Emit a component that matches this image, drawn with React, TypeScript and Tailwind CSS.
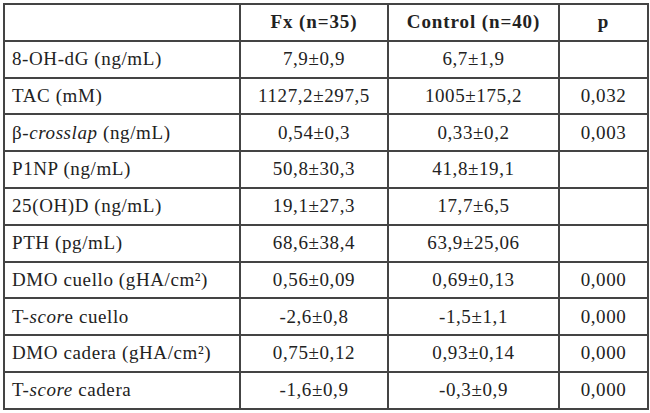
import type { ReactNode } from "react";

interface Row {
  label: ReactNode;
  fx: string;
  control: string;
  p: string;
}

const rows: Row[] = [
  { label: "8-OH-dG (ng/mL)", fx: "7,9±0,9", control: "6,7±1,9", p: "" },
  { label: "TAC (mM)", fx: "1127,2±297,5", control: "1005±175,2", p: "0,032" },
  {
    label: (
      <>
        β-<i>crosslap</i> (ng/mL)
      </>
    ),
    fx: "0,54±0,3",
    control: "0,33±0,2",
    p: "0,003",
  },
  { label: "P1NP (ng/mL)", fx: "50,8±30,3", control: "41,8±19,1", p: "" },
  { label: "25(OH)D (ng/mL)", fx: "19,1±27,3", control: "17,7±6,5", p: "" },
  { label: "PTH (pg/mL)", fx: "68,6±38,4", control: "63,9±25,06", p: "" },
  { label: "DMO cuello (gHA/cm²)", fx: "0,56±0,09", control: "0,69±0,13", p: "0,000" },
  {
    label: (
      <>
        T-<i>scor</i>e cuello
      </>
    ),
    fx: "-2,6±0,8",
    control: "-1,5±1,1",
    p: "0,000",
  },
  { label: "DMO cadera (gHA/cm²)", fx: "0,75±0,12", control: "0,93±0,14", p: "0,000" },
  {
    label: (
      <>
        T-<i>score</i> cadera
      </>
    ),
    fx: "-1,6±0,9",
    control: "-0,3±0,9",
    p: "0,000",
  },
];

const cell = "border-r-2 border-b-2 border-[#444] p-0 align-middle";

export default function App() {
  return (
    <div className="w-[650px] h-[413px] bg-white p-[3px] text-[#222] font-['Liberation_Serif',serif] text-[19px] tracking-[0.6px]">
      <table className="table-fixed border-separate border-spacing-0 border-l-2 border-t-2 border-[#444] w-[644px]">
        <colgroup>
          <col className="w-[236px]" />
          <col className="w-[148px]" />
          <col className="w-[171px]" />
          <col className="w-[89px]" />
        </colgroup>
        <thead>
          <tr className="h-[36.8px] font-bold tracking-[0.9px]">
            <th className={cell}></th>
            <th className={`${cell} text-center`}>Fx (n=35)</th>
            <th className={`${cell} text-center`}>Control (n=40)</th>
            <th className={`${cell} text-center`}>p</th>
          </tr>
        </thead>
        <tbody>
          {rows.map((r, i) => (
            <tr key={i} className="h-[36.8px]">
              <td className={`${cell} pl-[7px] text-left`}>{r.label}</td>
              <td className={`${cell} text-center`}>{r.fx}</td>
              <td className={`${cell} text-center`}>{r.control}</td>
              <td className={`${cell} text-center`}>{r.p}</td>
            </tr>
          ))}
        </tbody>
      </table>
    </div>
  );
}
